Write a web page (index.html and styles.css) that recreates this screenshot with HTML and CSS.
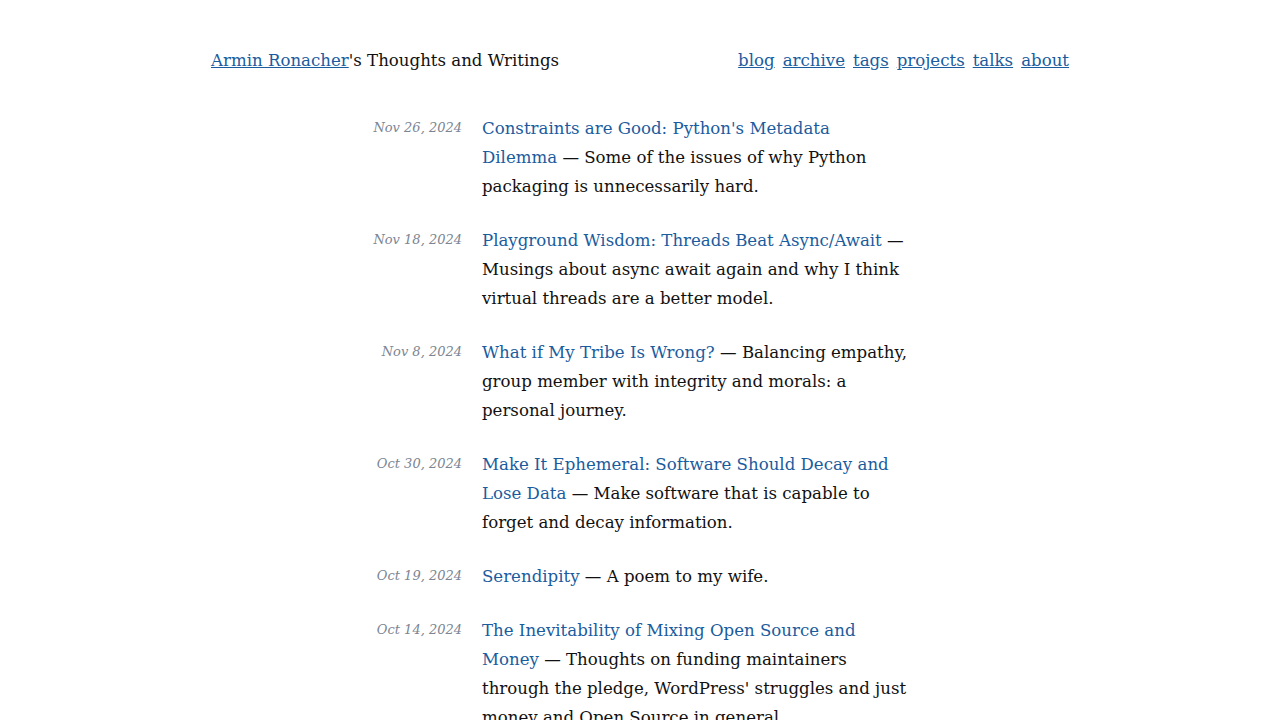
FILE: index.html
```html
<!DOCTYPE html>
<html>
<head>
<meta charset="utf-8">
<title>Armin Ronacher's Thoughts and Writings</title>
<link rel="stylesheet" href="styles.css">
</head>
<body>
<div class="page">
  <header class="header">
    <div class="title"><a href="#">Armin Ronacher</a>'s Thoughts and Writings</div>
    <nav class="nav">
      <a href="#">blog</a>
      <a href="#">archive</a>
      <a href="#">tags</a>
      <a href="#">projects</a>
      <a href="#">talks</a>
      <a href="#">about</a>
    </nav>
  </header>
  <main class="entries">
    <div class="entry">
      <div class="date">Nov 26, 2024</div>
      <div class="text"><a href="#">Constraints are Good: Python's Metadata Dilemma</a> — Some of the issues of why Python packaging is unnecessarily hard.</div>
    </div>
    <div class="entry">
      <div class="date">Nov 18, 2024</div>
      <div class="text"><a href="#">Playground Wisdom: Threads Beat Async/Await</a> — Musings about async await again and why I think virtual threads are a better model.</div>
    </div>
    <div class="entry">
      <div class="date">Nov 8, 2024</div>
      <div class="text"><a href="#">What if My Tribe Is Wrong?</a> — Balancing empathy, group member with integrity and morals: a personal journey.</div>
    </div>
    <div class="entry">
      <div class="date">Oct 30, 2024</div>
      <div class="text"><a href="#">Make It Ephemeral: Software Should Decay and Lose Data</a> — Make software that is capable to forget and decay information.</div>
    </div>
    <div class="entry">
      <div class="date">Oct 19, 2024</div>
      <div class="text"><a href="#">Serendipity</a> — A poem to my wife.</div>
    </div>
    <div class="entry">
      <div class="date">Oct 14, 2024</div>
      <div class="text"><a href="#">The Inevitability of Mixing Open Source and Money</a> — Thoughts on funding maintainers through the pledge, WordPress' struggles and just money and Open Source in general.</div>
    </div>
  </main>
</div>
</body>
</html>
```

FILE: styles.css
```css
html, body {
  margin: 0;
  padding: 0;
  background: #fff;
}
body {
  font-family: "DejaVu Serif", "Liberation Serif", serif;
  font-size: 16.6px;
  line-height: 29px;
  color: #111;
}
a {
  color: #1a5c9e;
}
.page {
  width: 858px;
  margin: 0 auto;
  padding-top: 46px;
}
.header {
  display: flex;
  justify-content: space-between;
  align-items: baseline;
}
.nav {
  display: flex;
  gap: 8px;
}
.entries {
  width: 556px;
  margin: 39px auto 0;
}
.entry {
  display: grid;
  grid-template-columns: 100px 426.5px;
  column-gap: 20px;
  margin-bottom: 25px;
}
.entry .text a {
  text-decoration: none;
}
.date {
  text-align: right;
  font-style: italic;
  font-size: 13px;
  line-height: 27px;
  color: #7b8593;
}
```
